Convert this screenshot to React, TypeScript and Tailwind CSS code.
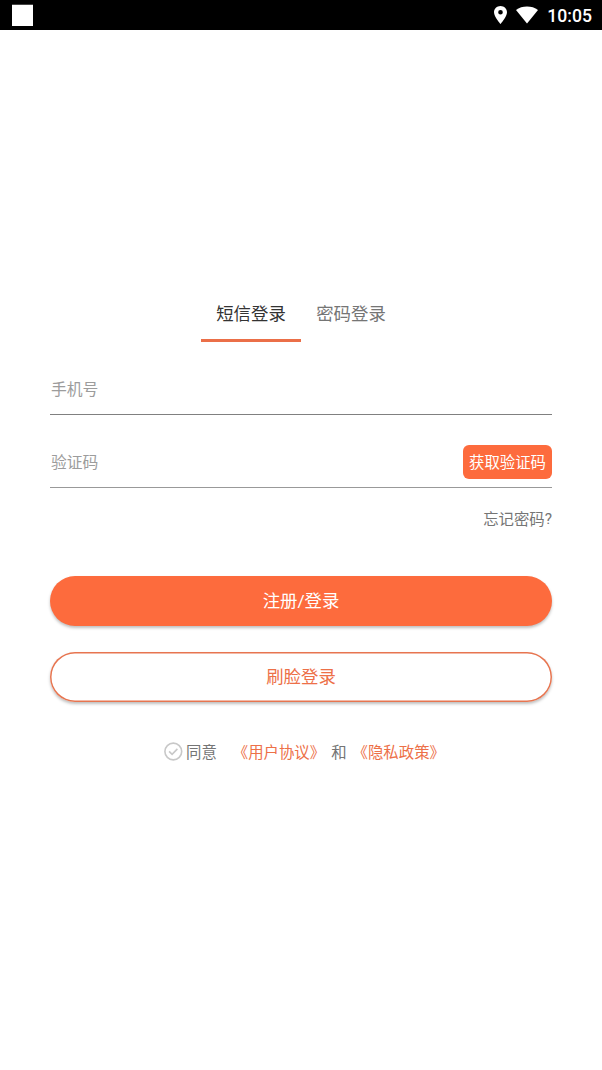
function StatusBar() {
  return (
    <header className="flex h-[30px] items-center justify-between bg-black pl-3 pr-[10px] text-white">
      <div className="h-[22px] w-[21px] border-t border-[#444] bg-white" />
      <div className="flex items-center">
        <svg className="mr-[9px] h-[18px] w-[13px]" viewBox="5 2 14 20" preserveAspectRatio="none" fill="currentColor">
          <path d="M12 2C8.13 2 5 5.13 5 9c0 5.25 7 13 7 13s7-7.75 7-13c0-3.87-3.13-7-7-7zm0 9.5a2.5 2.5 0 1 1 0-5 2.5 2.5 0 0 1 0 5z" />
        </svg>
        <svg className="mr-[9px] h-[18px] w-[22px]" viewBox="0 0 22 18" fill="currentColor">
          <path d="M0 4C6 -.6 16 -.6 22 4L11 17.5Z" />
        </svg>
        <span className="pt-[2px] font-[Roboto] text-[17.6px] font-medium leading-[28px]">10:05</span>
      </div>
    </header>
  );
}

export default function App() {
  return (
    <div className="min-h-[1070px] bg-white font-['Roboto','Noto_Sans_CJK_SC',sans-serif] text-[#757575]">
      <StatusBar />
      <main className="px-[50px] pt-[257px]">
        <nav className="ml-[151px] flex h-[55px] text-[17.4px]">
          <button className="flex w-[100px] items-center justify-center border-b-3 border-[#eb6f48] pt-[3px] text-[#333]">短信登录</button>
          <button className="flex w-[100px] items-center justify-center border-b-3 border-transparent pt-[3px]">密码登录</button>
        </nav>

        <div className="mt-[22px] flex h-[51px] items-center border-b border-[#808080]">
          <input
            aria-label="手机号"
            placeholder="手机号"
            className="w-full bg-transparent pl-[1px] pt-[2px] text-[15.8px] outline-none placeholder:text-[#9c9c9c]"
          />
        </div>
        <div className="mt-[22px] flex h-[51px] items-center border-b border-[#999]">
          <input
            aria-label="验证码"
            placeholder="验证码"
            className="min-w-0 flex-1 bg-transparent pl-[1px] pt-[2px] text-[15.8px] outline-none placeholder:text-[#9c9c9c]"
          />
          <button className="h-[34px] w-[89px] shrink-0 whitespace-nowrap rounded-[6px] bg-[#fd6b3d] pt-[3px] text-[15.4px] text-white">
            获取验证码
          </button>
        </div>
        <div className="mt-[21px] flex h-6 items-center justify-end text-[15.4px]">忘记密码<span className="-mt-[2px]">?</span></div>

        <button className="mt-[43px] flex h-[50px] w-full items-center justify-center rounded-full bg-[#fd6b3d] text-[17.4px] text-white shadow-[0_2px_3px_rgba(0,0,0,0.25)]">
          注册/登录
        </button>
        <button className="mt-[26px] flex h-[50px] w-full items-center justify-center rounded-full bg-white text-[17.4px] text-[#ed7048] shadow-[inset_0_0_0_1.5px_#e77550,0_2px_3px_rgba(0,0,0,0.25)]">
          刷脸登录
        </button>

        <div className="mt-[37px] flex h-6 items-center whitespace-nowrap pl-[114px] text-[15.4px]">
          <svg className="mr-[3px] h-[19px] w-[19px] shrink-0" viewBox="0 0 19 19" fill="none" stroke="#c8c8c8" strokeWidth="1.6">
            <circle cx="9.3" cy="9.5" r="8.4" />
            <path d="M5.1 9.4l3 3 5.3-5.5" />
          </svg>
          <div className="flex pt-[5px]">
            <span>同意</span>
            <a className="ml-4 text-[#ed7048]">《用户协议》</a>
            <span className="ml-[6px]">和</span>
            <a className="ml-[6px] text-[#ed7048]">《隐私政策》</a>
          </div>
        </div>
      </main>
    </div>
  );
}
